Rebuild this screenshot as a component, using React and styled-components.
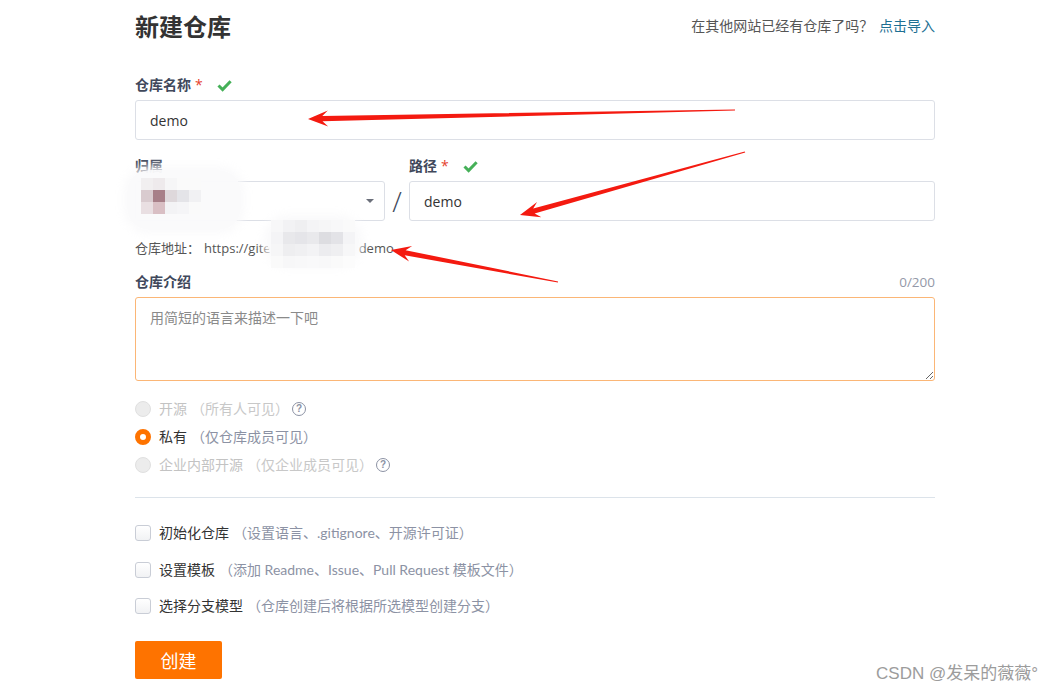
import React from 'react';
import styled, { createGlobalStyle } from 'styled-components';

const GlobalStyle = createGlobalStyle`
  html, body { margin: 0; padding: 0; background: #fff; }
  body { font-family: "Open Sans", "Noto Sans CJK SC", sans-serif; color: #333; }
  * { box-sizing: border-box; }
`;

const Page = styled.div`
  position: relative;
  width: 1052px;
  height: 690px;
  overflow: hidden;
  background: #fff;
`;

const Container = styled.div`
  width: 800px;
  margin-left: 135px;
  padding-top: 11px;
  display: flex;
  flex-direction: column;
`;

const Header = styled.div`
  display: flex;
  justify-content: space-between;
  align-items: center;
  height: 32px;
`;

const Title = styled.h1`
  margin: 0;
  font-size: 24px;
  font-weight: 700;
  line-height: 32px;
  color: #333;
`;

const ImportHint = styled.div`
  font-size: 14px;
  line-height: 20px;
  color: #555;
  margin-top: -2px;
`;

const ImportLink = styled.a`
  color: #1d6f93;
  text-decoration: none;
  margin-left: 2px;
`;

const Field = styled.div`
  display: flex;
  flex-direction: column;
  gap: 5px;
  margin-top: ${(p) => p.$mt || 0}px;
  min-width: 0;
`;

const Label = styled.div`
  display: flex;
  align-items: center;
  justify-content: space-between;
  height: 20px;
  font-size: 14px;
  line-height: 20px;
  font-weight: 700;
  color: #40485b;
`;

const LabelText = styled.span`
  display: inline-flex;
  align-items: center;
`;

const Req = styled.span`
  color: #e5412d;
  margin-left: 4px;
  font-weight: 400;
`;

const CheckIcon = styled.svg`
  width: 15px;
  height: 13px;
  margin-left: 14px;
`;

const Counter = styled.span`
  font-weight: 400;
  font-size: 13.5px;
  color: #9499a8;
`;

const TextInput = styled.input`
  height: 40px;
  width: 100%;
  border: 1px solid #dcdfe6;
  border-radius: 3px;
  padding: 0 14px;
  font-family: inherit;
  font-size: 14px;
  color: #333;
  outline: none;
  background: #fff;
`;

const PathRow = styled.div`
  display: grid;
  grid-template-columns: 250px 24px 1fr;
  margin-top: 16px;
`;

const SelectBox = styled.div`
  position: relative;
  height: 40px;
  border: 1px solid #dcdfe6;
  border-radius: 3px;
  background: #fff;
  display: flex;
  align-items: center;
  justify-content: flex-end;
  padding-right: 10px;
`;

const Caret = styled.span`
  width: 0;
  height: 0;
  border-left: 4px solid transparent;
  border-right: 4px solid transparent;
  border-top: 4px solid #6b6f7a;
`;

const Slash = styled.div`
  align-self: end;
  height: 40px;
  display: flex;
  align-items: center;
  justify-content: center;
  font-size: 28px;
  font-weight: 300;
  color: #40485b;
  font-family: "Open Sans", sans-serif;
`;

const MosaicBlob = styled.div`
  position: absolute;
  left: ${(p) => p.$x}px;
  top: ${(p) => p.$y}px;
  width: ${(p) => p.$w}px;
  height: ${(p) => p.$h}px;
  background: rgba(250, 250, 251, 0.97);
  border-radius: 22px;
  box-shadow: 0 0 8px 4px rgba(250, 250, 251, 0.9);
`;

const MosaicGrid = styled.div`
  position: absolute;
  left: ${(p) => p.$x}px;
  top: ${(p) => p.$y}px;
  display: grid;
  grid-template-columns: repeat(${(p) => p.$cols}, ${(p) => p.$cell}px);
  grid-auto-rows: ${(p) => p.$cell}px;
`;

const Cell = styled.span`
  background: ${(p) => p.$c};
`;

const UrlLine = styled.div`
  margin-top: 17px;
  font-size: 13px;
  line-height: 20px;
  color: #555;
  display: flex;
  align-items: center;
`;

const UrlPrefix = styled.span`
  margin-right: 4px;
`;

const UrlMask = styled.span`
  position: relative;
  display: inline-block;
  width: 88px;
  height: 16px;
`;

const TextArea = styled.textarea`
  width: 100%;
  height: 84px;
  border: 1px solid #fbb676;
  border-radius: 3px;
  padding: 10px 14px;
  font-family: inherit;
  font-size: 14px;
  line-height: 20px;
  color: #333;
  outline: none;
  resize: vertical;
  &::placeholder { color: #8a8a8a; }
`;

const RadioGroup = styled.div`
  margin-top: 14px;
  display: flex;
  flex-direction: column;
`;

const OptionRow = styled.label`
  display: flex;
  align-items: center;
  height: ${(p) => p.$h}px;
  font-size: 14px;
  line-height: 20px;
  color: ${(p) => (p.$disabled ? '#c3c3c3' : '#333')};
`;

const RadioDot = styled.span`
  width: 16px;
  height: 16px;
  border-radius: 50%;
  margin-right: 8px;
  flex: none;
  background: ${(p) => (p.$checked ? '#fff' : '#ececec')};
  border: ${(p) => (p.$checked ? '5px solid #fe7300' : '1px solid #e0e0e0')};
`;

const Hint = styled.span`
  font-family: "Lato", "Noto Sans CJK SC", sans-serif;
  color: ${(p) => (p.$disabled ? '#c8c8c8' : '#8c92a4')};
  margin-left: 4px;
`;

const HelpIcon = styled.span`
  display: inline-flex;
  align-items: center;
  justify-content: center;
  width: 14px;
  height: 14px;
  border-radius: 50%;
  border: 1.3px solid #8c92a4;
  color: #8c92a4;
  font-size: 10px;
  font-weight: 700;
  line-height: 1;
  margin-left: 3px;
  font-family: "Liberation Sans", sans-serif;
`;

const Divider = styled.hr`
  margin: 18px 0 0;
  border: none;
  border-top: 1px solid #dce3ea;
  width: 100%;
`;

const CheckGroup = styled.div`
  margin-top: 17px;
  display: flex;
  flex-direction: column;
`;

const CheckBox = styled.span`
  width: 16px;
  height: 16px;
  border: 1px solid #c9cdd6;
  border-radius: 3px;
  background: linear-gradient(#fff, #f1f2f4);
  margin-right: 8px;
  flex: none;
`;

const CreateButton = styled.button`
  margin-top: 16px;
  width: 87px;
  height: 38px;
  border: none;
  border-radius: 2px;
  background: #fe7300;
  color: #fff;
  font-family: "Noto Sans CJK SC", sans-serif;
  font-size: 18px;
  cursor: pointer;
  align-self: flex-start;
`;

const Overlay = styled.svg`
  position: absolute;
  left: 0;
  top: 0;
  width: 1052px;
  height: 690px;
  pointer-events: none;
`;

const Watermark = styled.div`
  position: absolute;
  right: 14px;
  bottom: 6px;
  font-family: "Liberation Sans", "Noto Sans CJK SC", sans-serif;
  font-size: 17px;
  color: #9c9c9c;
  text-shadow: 0 0 1px #fff;
`;

function Check() {
  return (
    <CheckIcon viewBox="0 0 15 13">
      <path d="M1.5 6.5 L5.6 10.6 L13.6 2.2" fill="none" stroke="#45b058" strokeWidth="3" />
    </CheckIcon>
  );
}

function arrowPoints(s, t, head = 20, hw = 8, tail = 0.6, neck = 2.6) {
  const dx = t[0] - s[0];
  const dy = t[1] - s[1];
  const len = Math.hypot(dx, dy);
  const ux = dx / len;
  const uy = dy / len;
  const nx = -uy;
  const ny = ux;
  const bx = t[0] - ux * head;
  const by = t[1] - uy * head;
  const kx = t[0] - ux * head * 0.72;
  const ky = t[1] - uy * head * 0.72;
  const pts = [
    [s[0] + nx * tail, s[1] + ny * tail],
    [kx + nx * neck, ky + ny * neck],
    [bx + nx * hw, by + ny * hw],
    [t[0], t[1]],
    [bx - nx * hw, by - ny * hw],
    [kx - nx * neck, ky - ny * neck],
    [s[0] - nx * tail, s[1] - ny * tail],
  ];
  return pts.map((p) => p.map((v) => v.toFixed(1)).join(',')).join(' ');
}

const arrows = [
  { s: [735, 110], t: [308, 119] },
  { s: [745, 152], t: [520, 215] },
  { s: [558, 282], t: [391, 250] },
];

const selectCells = [
  '#f1eff0', '#eeeaec', '#f6f6f7', '#fafafa', '#fafafa',
  '#d9cbcf', '#a77f88', '#ded8db', '#e4e4e8', '#f1f1f3',
  '#e9dfe2', '#d9bfc4', '#f3f3f5', '#f5f5f7', '#fafafa',
];

const urlCells = [
  '#f7f7f8', '#f2f2f4', '#efeff1', '#f4f4f6', '#f6f6f7', '#f8f8f9', '#fafafa',
  '#f4f4f6', '#e8e8eb', '#e5e5e9', '#e9e9ec', '#dddde1', '#e3e3e7', '#f4f4f6',
  '#f6f6f7', '#eeeef0', '#f0f0f2', '#f3f3f5', '#ececef', '#efeff1', '#f7f7f8',
  '#fafafa', '#f7f7f8', '#f8f8f9', '#f9f9fa', '#f8f8f9', '#fafafa', '#fcfcfc',
];

const radios = [
  { label: '开源', hint: '（所有人可见）', disabled: true, help: true, h: 28 },
  { label: '私有', hint: '（仅仓库成员可见）', checked: true, h: 28 },
  { label: '企业内部开源', hint: '（仅企业成员可见）', disabled: true, help: true, h: 28 },
];

const checks = [
  { label: '初始化仓库', hint: '（设置语言、.gitignore、开源许可证）' },
  { label: '设置模板', hint: '（添加 Readme、Issue、Pull Request 模板文件）' },
  { label: '选择分支模型', hint: '（仓库创建后将根据所选模型创建分支）' },
];

export default function App() {
  return (
    <Page>
      <GlobalStyle />
      <Container>
        <Header>
          <Title>新建仓库</Title>
          <ImportHint>
            在其他网站已经有仓库了吗？ <ImportLink href="#">点击导入</ImportLink>
          </ImportHint>
        </Header>

        <Field $mt={32}>
          <Label>
            <LabelText>
              仓库名称<Req>*</Req>
              <Check />
            </LabelText>
          </Label>
          <TextInput readOnly value="demo" />
        </Field>

        <PathRow>
          <Field>
            <Label>
              <LabelText>归属</LabelText>
            </Label>
            <SelectBox>
              <MosaicBlob $x={-9} $y={-12} $w={114} $h={60} />
              <MosaicGrid $x={5} $y={-4} $cols={5} $cell={12}>
                {selectCells.map((c, i) => (
                  <Cell key={i} $c={c} />
                ))}
              </MosaicGrid>
              <Caret />
            </SelectBox>
          </Field>
          <Slash>/</Slash>
          <Field>
            <Label>
              <LabelText>
                路径<Req>*</Req>
                <Check />
              </LabelText>
            </Label>
            <TextInput readOnly value="demo" />
          </Field>
        </PathRow>

        <UrlLine>
          <UrlPrefix>仓库地址：</UrlPrefix>https://gite
          <UrlMask>
            <MosaicBlob $x={-4} $y={-22} $w={92} $h={46} />
            <MosaicGrid $x={0} $y={-20} $cols={7} $cell={12}>
              {urlCells.map((c, i) => (
                <Cell key={i} $c={c} />
              ))}
            </MosaicGrid>
          </UrlMask>
          demo
        </UrlLine>

        <Field $mt={14}>
          <Label>
            <LabelText>仓库介绍</LabelText>
            <Counter>0/200</Counter>
          </Label>
          <TextArea placeholder="用简短的语言来描述一下吧" />
        </Field>

        <RadioGroup>
          {radios.map((r) => (
            <OptionRow key={r.label} $h={r.h} $disabled={r.disabled}>
              <RadioDot $checked={r.checked} />
              {r.label}
              <Hint $disabled={r.disabled}>{r.hint}</Hint>
              {r.help && <HelpIcon>?</HelpIcon>}
            </OptionRow>
          ))}
        </RadioGroup>

        <Divider />

        <CheckGroup>
          {checks.map((c) => (
            <OptionRow key={c.label} $h={36.5}>
              <CheckBox />
              {c.label}
              <Hint>{c.hint}</Hint>
            </OptionRow>
          ))}
        </CheckGroup>

        <CreateButton>创建</CreateButton>
      </Container>

      <Overlay viewBox="0 0 1052 690">
        {arrows.map((a, i) => (
          <polygon key={i} points={arrowPoints(a.s, a.t)} fill="#f41a10" />
        ))}
      </Overlay>

      <Watermark>CSDN @发呆的薇薇°</Watermark>
    </Page>
  );
}
